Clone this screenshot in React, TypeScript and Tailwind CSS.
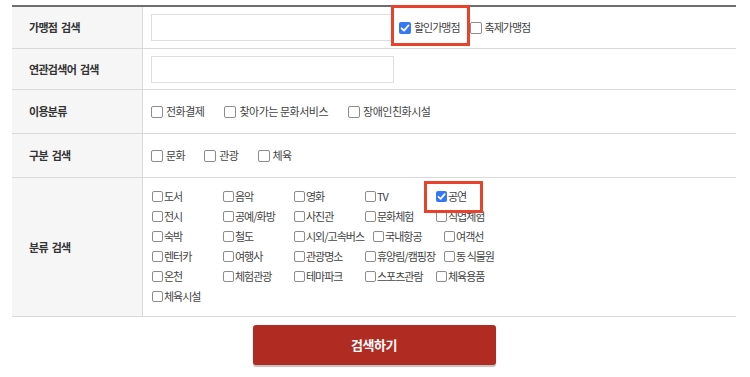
import React from "react";

const Box = ({ checked = false, size = 12 }: { checked?: boolean; size?: number }) =>
  checked ? (
    <span
      className="inline-flex items-center justify-center rounded-[2px] bg-[#3478f6] shrink-0"
      style={{ width: size, height: size }}
    >
      <svg viewBox="0 0 12 12" className="w-full h-full">
        <path d="M2.6 6.3 L5 8.6 L9.5 3.4" fill="none" stroke="#fff" strokeWidth="1.8" strokeLinecap="round" strokeLinejoin="round" />
      </svg>
    </span>
  ) : (
    <span
      className="inline-block rounded-[2px] border border-[#8c8c8c] bg-white shrink-0"
      style={{ width: size, height: size }}
    />
  );

const categories: [string, boolean][] = [
  ["도서", false], ["음악", false], ["영화", false], ["TV", false], ["공연", true],
  ["전시", false], ["공예/화방", false], ["사진관", false], ["문화체험", false], ["직업체험", false],
  ["숙박", false], ["철도", false], ["시외/고속버스", false], ["국내항공", false], ["여객선", false],
  ["렌터카", false], ["여행사", false], ["관광명소", false], ["휴양림/캠핑장", false], ["동 식물원", false],
  ["온천", false], ["체험관광", false], ["테마파크", false], ["스포츠관람", false], ["체육용품", false],
  ["체육시설", false],
];

const Label = ({ children }: { children: React.ReactNode }) => (
  <div className="w-[131px] shrink-0 bg-[#f6f6f6] border-r border-[#d9d9d9] pl-[17px] flex items-center text-[11px] font-bold text-[#333] tracking-[-0.7px] [word-spacing:2px]">
    {children}
  </div>
);

const Opt = ({ text, mr }: { text: string; mr: string }) => (
  <span className={`inline-flex items-center ${mr}`}>
    <Box />
    <span className="ml-[3px] text-[11px] text-[#444] tracking-[-0.5px]">{text}</span>
  </span>
);

export default function App() {
  return (
    <div className="relative w-[750px] h-[377px] bg-white font-['Noto_Sans_CJK_KR',sans-serif] overflow-hidden">
      <div className="ml-[12px] mt-[5px] w-[724px] border-t-2 border-[#6e6e6e]">
        <div className="flex h-[42px] border-b border-[#d9d9d9]">
          <Label>가맹점 검색</Label>
          <div className="flex-1 pl-[8px] flex items-center">
            <div className="w-[243px] h-[27px] border border-[#dedede] bg-white" />
            <span className="inline-flex items-center ml-[5px]">
              <Box checked />
              <span className="ml-[3px] text-[11px] text-[#444] tracking-[-1px]">할인가맹점</span>
            </span>
            <span className="inline-flex items-center ml-[10px]">
              <Box />
              <span className="ml-[3px] text-[11px] text-[#444] tracking-[-1px]">축제가맹점</span>
            </span>
          </div>
        </div>
        <div className="flex h-[41px] border-b border-[#d9d9d9]">
          <Label>연관검색어 검색</Label>
          <div className="flex-1 pl-[8px] flex items-center">
            <div className="w-[243px] h-[27px] border border-[#dedede] bg-white" />
          </div>
        </div>
        <div className="flex h-[44px] border-b border-[#d9d9d9]">
          <Label>이용분류</Label>
          <div className="flex-1 pl-[8px] flex items-center">
            <Opt text="전화결제" mr="mr-[20px]" />
            <Opt text="찾아가는 문화서비스" mr="mr-[20px]" />
            <Opt text="장애인친화시설" mr="mr-[20px]" />
          </div>
        </div>
        <div className="flex h-[44px] border-b border-[#d9d9d9]">
          <Label>구분 검색</Label>
          <div className="flex-1 pl-[8px] flex items-center">
            <Opt text="문화" mr="mr-[19px]" />
            <Opt text="관광" mr="mr-[19px]" />
            <Opt text="체육" mr="mr-[19px]" />
          </div>
        </div>
        <div className="flex h-[139px] border-b border-[#d9d9d9]">
          <Label>분류 검색</Label>
          <div className="flex-1 pl-[9px] pt-[8px]">
            <div className="w-[400px] flex flex-wrap">
              {categories.map(([t, c]) => (
                <span key={t} className="inline-flex items-center h-[20px] min-w-[62px] mr-[9px]">
                  <Box checked={c} size={11} />
                  <span className="ml-[1px] text-[11px] text-[#444] tracking-[-1px]">{t}</span>
                </span>
              ))}
            </div>
          </div>
        </div>
        <div className="flex justify-center pt-[8px]">
          <button className="w-[243px] h-[40px] rounded-[3px] bg-[#b02b22] shadow-[0_2px_1px_rgba(0,0,0,0.25)] text-white text-[13px] font-bold tracking-[-0.5px]">
            검색하기
          </button>
        </div>
      </div>
      <div className="absolute left-[391px] top-[5px] w-[79px] h-[41px] border-[3px] border-[#e8412c]" />
      <div className="absolute left-[424px] top-[181px] w-[59px] h-[32px] border-[3px] border-[#e8412c]" />
    </div>
  );
}
